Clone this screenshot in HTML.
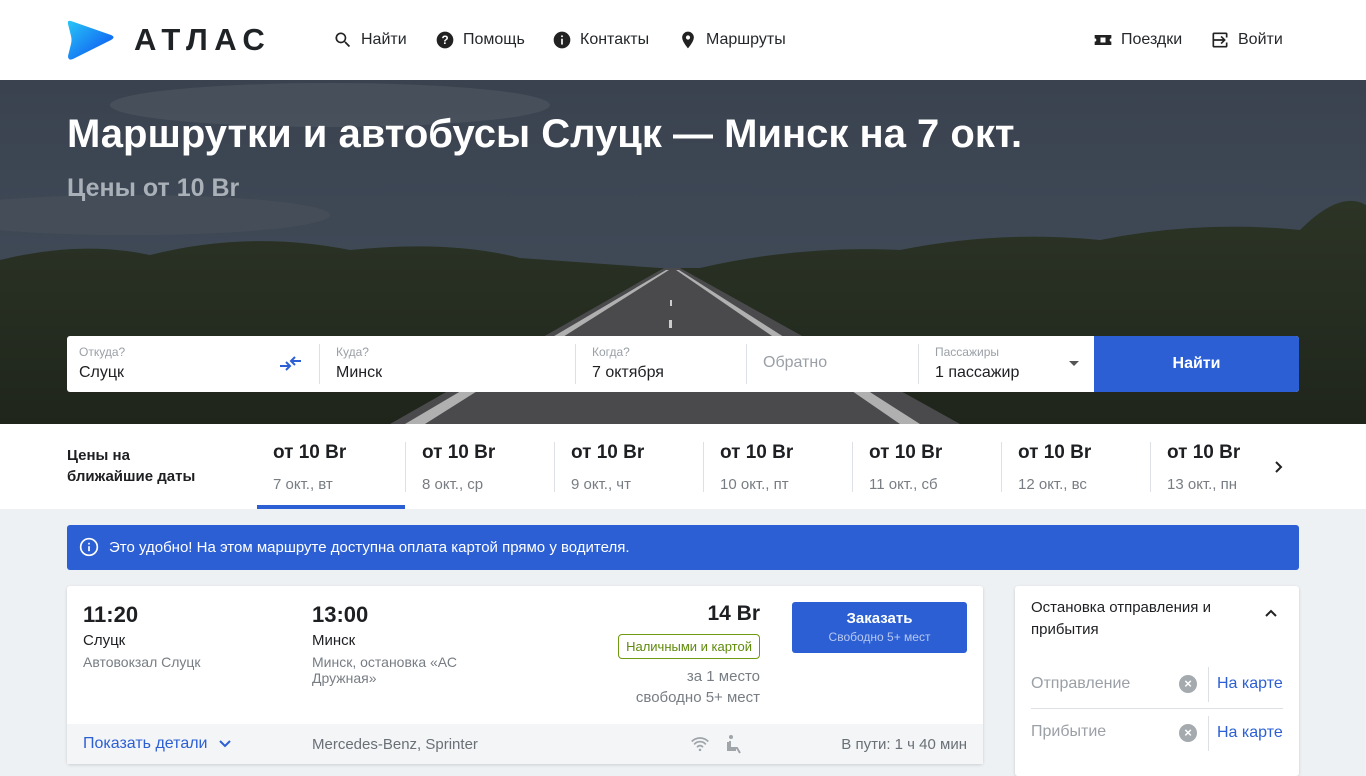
<!DOCTYPE html>
<html><head><meta charset="utf-8"><style>
*{box-sizing:border-box;margin:0;padding:0}
body{width:1366px;height:768px;overflow:hidden;font-family:"Liberation Sans",sans-serif;background:#eef1f4;color:#1d1f22;position:relative}
.hdr{position:absolute;top:0;left:0;width:1366px;height:80px;background:#fff}
.nav{position:absolute;top:30px;font-size:16px;color:#25282b;display:flex;align-items:center;gap:8px}
.hero{position:absolute;top:80px;left:0;width:1366px;height:344px;overflow:hidden}
.ab{position:absolute}
.form{position:absolute;top:336px;left:67px;width:1232px;height:56px;background:#fff;border-radius:3px}
.lbl{position:absolute;top:9px;font-size:12px;color:#9aa0a6}
.val{position:absolute;top:28px;font-size:16px;color:#1d1f22}
.sep{position:absolute;top:8px;width:1px;height:40px;background:#dde1e5}
.dates{position:absolute;top:424px;left:0;width:1366px;height:85px;background:#fff}
.d{position:absolute;top:18px;width:149px;padding-left:16px;height:50px}
.d b{font-size:19px;display:block}
.d span{font-size:15px;color:#777d83;display:block;margin-top:12px}
.card{position:absolute;background:#fff;box-shadow:0 1px 3px rgba(0,0,0,.15);border-radius:3px}
</style></head><body>
<div class="hdr">
<svg class="ab" style="left:66px;top:20px" width="50" height="41" viewBox="0 0 50 41"><defs><linearGradient id="g" x1="0" y1="0" x2="1" y2="1"><stop offset="0" stop-color="#29c6f6"/><stop offset="1" stop-color="#0a4cf3"/></linearGradient></defs><path d="M2 4 Q1 0 5 1 L45 15 Q50 17 45 20 L7 39 Q2 41 2 36 L5 24 Q6 20 5 16 Z" fill="url(#g)"/></svg>
<div class="ab" style="left:134px;top:22px;font-size:31px;font-weight:bold;letter-spacing:6.5px;color:#1f2326">АТЛАС</div>
<div class="nav" style="left:333px"><svg width="20" height="20" viewBox="0 0 24 24"><path d="M15.5 14h-.8l-.3-.3A6.5 6.5 0 1 0 9.5 16a6.5 6.5 0 0 0 4.2-1.6l.3.3v.8l5 5 1.5-1.5zm-6 0a4.5 4.5 0 1 1 0-9 4.5 4.5 0 0 1 0 9z" fill="#222"/></svg>Найти</div>
<div class="nav" style="left:435px"><svg width="20" height="20" viewBox="0 0 24 24"><circle cx="12" cy="12" r="10" fill="#222"/><text x="12" y="17" font-size="14" font-weight="bold" fill="#fff" text-anchor="middle" font-family="Liberation Sans">?</text></svg>Помощь</div>
<div class="nav" style="left:552px"><svg width="20" height="20" viewBox="0 0 24 24"><circle cx="12" cy="12" r="10" fill="#222"/><rect x="11" y="10.5" width="2" height="7" fill="#fff"/><rect x="11" y="6.5" width="2" height="2" fill="#fff"/></svg>Контакты</div>
<div class="nav" style="left:678px;top:29px"><svg width="20" height="22" viewBox="0 0 24 24"><path d="M12 2a7 7 0 0 0-7 7c0 5 7 13 7 13s7-8 7-13a7 7 0 0 0-7-7zm0 9.5a2.5 2.5 0 1 1 0-5 2.5 2.5 0 0 1 0 5z" fill="#222"/></svg>Маршруты</div>
<div class="nav" style="left:1093px"><svg width="20" height="20" viewBox="0 0 24 24"><path d="M2 6h20v4a2 2 0 0 0 0 4v4H2v-4a2 2 0 0 0 0-4z" fill="#222"/><rect x="9" y="9" width="6" height="6" fill="#fff"/></svg>Поездки</div>
<div class="nav" style="left:1210px"><svg width="20" height="20" viewBox="0 0 24 24"><path d="M10 17l1.4-1.4-2.6-2.6H19v-2H8.8l2.6-2.6L10 7l-5 5zM19 3H5a2 2 0 0 0-2 2v4h2V5h14v14H5v-4H3v4a2 2 0 0 0 2 2h14a2 2 0 0 0 2-2V5a2 2 0 0 0-2-2z" fill="#222" transform="scale(-1,1) translate(-24,0)"/></svg>Войти</div>
</div>
<div class="hero">
<svg width="1366" height="344" viewBox="0 0 1366 344" preserveAspectRatio="none">
<defs><linearGradient id="sky" x1="0" y1="0" x2="0" y2="1"><stop offset="0" stop-color="#3a424f"/><stop offset=".5" stop-color="#3f4956"/><stop offset="1" stop-color="#3e4650"/></linearGradient>
<linearGradient id="tr" x1="0" y1="0" x2="0" y2="1"><stop offset="0" stop-color="#2c3426"/><stop offset="1" stop-color="#1f251b"/></linearGradient></defs>
<rect width="1366" height="344" fill="url(#sky)"/>
<ellipse cx="330" cy="25" rx="220" ry="22" fill="#545c66" opacity=".5"/>
<ellipse cx="130" cy="135" rx="200" ry="20" fill="#4d545e" opacity=".45"/>
<path d="M0 180 Q80 160 150 175 Q250 150 350 170 Q450 160 520 178 L660 188 L700 188 Q800 165 900 170 Q1000 150 1100 160 Q1200 140 1300 150 Q1340 110 1366 125 L1366 344 L0 344Z" fill="url(#tr)"/>
<path d="M664 188 L680 188 L960 344 L390 344 Z" fill="#4a4a4c"/>
<path d="M666 190 L405 344 L425 344 L669 190Z M676 190 L900 344 L920 344 L679 190Z" fill="#c9c9c9" opacity=".8"/>
<path d="M670 220 h2 v6 h-2z M669 240 h3 v8 h-3z" fill="#ccc"/>
</svg>
<div class="ab" style="left:67px;top:32px;font-size:40px;font-weight:bold;color:#fff">Маршрутки и автобусы Слуцк — Минск на 7 окт.</div>
<div class="ab" style="left:67px;top:94px;font-size:25px;font-weight:bold;color:#aab0b7">Цены от 10 Br</div>
</div>
<div class="form">
<div class="lbl" style="left:12px">Откуда?</div><div class="val" style="left:12px">Слуцк</div>
<svg class="ab" style="left:212px;top:18px" width="24" height="20" viewBox="0 0 24 20"><path d="M1 12h10M7 8l4 4-4 4M22 7H12M16 3l-4 4 4 4" stroke="#2c5fd4" stroke-width="2" fill="none"/></svg>
<div class="sep" style="left:252px"></div>
<div class="lbl" style="left:269px">Куда?</div><div class="val" style="left:269px">Минск</div>
<div class="sep" style="left:508px"></div>
<div class="lbl" style="left:525px">Когда?</div><div class="val" style="left:525px">7 октября</div>
<div class="sep" style="left:679px"></div>
<div class="val" style="left:696px;top:18px;color:#9aa0a6">Обратно</div>
<div class="sep" style="left:851px"></div>
<div class="lbl" style="left:868px">Пассажиры</div><div class="val" style="left:868px">1 пассажир</div>
<div class="ab" style="left:1002px;top:25px;width:0;height:0;border-left:5px solid transparent;border-right:5px solid transparent;border-top:5px solid #555"></div>
<div class="ab" style="left:1027px;top:0;width:205px;height:56px;background:#2c5fd4;border-radius:0 3px 3px 0;color:#fff;font-weight:bold;font-size:16px;text-align:center;line-height:56px">Найти</div>
</div>
<div class="dates">
<div class="ab" style="left:67px;top:21px;font-size:15px;font-weight:bold;line-height:21px">Цены на<br>ближайшие даты</div>
<div class="d" style="left:257px"><b>от 10 Br</b><span>7 окт., вт</span></div>
<div class="ab" style="left:257px;top:81px;width:148px;height:4px;background:#2c5fd4"></div>
<div class="d" style="left:405px;border-left:1px solid #dde1e5"><b>от 10 Br</b><span>8 окт., ср</span></div>
<div class="d" style="left:554px;border-left:1px solid #dde1e5"><b>от 10 Br</b><span>9 окт., чт</span></div>
<div class="d" style="left:703px;border-left:1px solid #dde1e5"><b>от 10 Br</b><span>10 окт., пт</span></div>
<div class="d" style="left:852px;border-left:1px solid #dde1e5"><b>от 10 Br</b><span>11 окт., сб</span></div>
<div class="d" style="left:1001px;border-left:1px solid #dde1e5"><b>от 10 Br</b><span>12 окт., вс</span></div>
<div class="d" style="left:1150px;border-left:1px solid #dde1e5;width:110px"><b>от 10 Br</b><span>13 окт., пн</span></div>
<svg class="ab" style="left:1272px;top:36px" width="14" height="14" viewBox="0 0 14 14"><path d="M4 2l5 5-5 5" stroke="#222" stroke-width="2" fill="none"/></svg>
</div>
<div class="ab" style="left:67px;top:525px;width:1232px;height:45px;background:#2c5fd4;border-radius:3px;color:#fff;font-size:15px">
<svg class="ab" style="left:12px;top:12px" width="20" height="20" viewBox="0 0 24 24"><circle cx="12" cy="12" r="10" stroke="#fff" stroke-width="2" fill="none"/><rect x="11" y="11" width="2" height="6" fill="#fff"/><rect x="11" y="7" width="2" height="2" fill="#fff"/></svg>
<div class="ab" style="left:42px;top:14px">Это удобно! На этом маршруте доступна оплата картой прямо у водителя.</div></div>
<div class="card" style="left:67px;top:586px;width:916px;height:178px">
<div class="ab" style="left:16px;top:16px;font-size:22px;font-weight:bold">11:20</div>
<div class="ab" style="left:16px;top:46px;font-size:15px">Слуцк</div>
<div class="ab" style="left:16px;top:68px;font-size:14px;color:#777d83">Автовокзал Слуцк</div>
<div class="ab" style="left:245px;top:16px;font-size:22px;font-weight:bold">13:00</div>
<div class="ab" style="left:245px;top:46px;font-size:15px">Минск</div>
<div class="ab" style="left:245px;top:68px;font-size:14px;color:#777d83;width:170px;line-height:16px">Минск, остановка «АС Дружная»</div>
<div class="ab" style="right:223px;top:16px;font-size:21px;font-weight:bold">14 Br</div>
<div class="ab" style="right:223px;top:48px;border:1px solid #6f9a10;color:#5f8a0a;border-radius:4px;font-size:13px;padding:4px 7px">Наличными и картой</div>
<div class="ab" style="right:223px;top:80px;font-size:15px;color:#777d83;text-align:right;line-height:21px">за 1 место<br>свободно 5+ мест</div>
<div class="ab" style="left:725px;top:16px;width:175px;height:51px;background:#2c5fd4;border-radius:3px;color:#fff;text-align:center"><div style="font-weight:bold;font-size:15px;margin-top:8px">Заказать</div><div style="font-size:12px;color:#b8c8ef;margin-top:3px">Свободно 5+ мест</div></div>
<div class="ab" style="left:0;top:138px;width:916px;height:40px;background:#f3f5f7">
<div class="ab" style="left:16px;top:11px;font-size:16px;color:#2c5fd4">Показать детали</div>
<svg class="ab" style="left:152px;top:16px" width="12" height="8" viewBox="0 0 12 8"><path d="M1 1l5 5 5-5" stroke="#2c5fd4" stroke-width="2" fill="none"/></svg>
<div class="ab" style="left:245px;top:12px;font-size:15px;color:#6a7076">Mercedes-Benz, Sprinter</div>
<svg class="ab" style="left:623px;top:11px" width="20" height="18" viewBox="0 0 24 20"><path d="M2 7a14 14 0 0 1 20 0M5 10.5a9 9 0 0 1 14 0M8.5 14a4 4 0 0 1 7 0" stroke="#a0a5aa" stroke-width="2" fill="none"/><circle cx="12" cy="17" r="1.5" fill="#a0a5aa"/></svg>
<svg class="ab" style="left:659px;top:10px" width="18" height="20" viewBox="0 0 18 20"><circle cx="5" cy="3" r="2" fill="#a0a5aa"/><path d="M4 7v7h7l3 5M2 8v8h8" stroke="#a0a5aa" stroke-width="2" fill="none"/></svg>
<div class="ab" style="right:16px;top:12px;font-size:15px;color:#6a7076">В пути: 1 ч 40 мин</div>
</div></div>
<div class="card" style="left:1015px;top:586px;width:284px;height:190px">
<div class="ab" style="left:16px;top:11px;font-size:15px;line-height:22px;width:200px">Остановка отправления и прибытия</div>
<svg class="ab" style="left:249px;top:22px" width="14" height="10" viewBox="0 0 14 10"><path d="M2 8l5-5 5 5" stroke="#222" stroke-width="2" fill="none"/></svg>
<div class="ab" style="left:16px;top:89px;font-size:16px;color:#9aa0a6">Отправление</div>
<div class="ab" style="left:164px;top:89px;width:18px;height:18px;border-radius:50%;background:#a5aaaf;color:#fff;font-size:13px;text-align:center;line-height:18px;font-weight:bold">×</div>
<div class="ab" style="left:193px;top:81px;width:1px;height:35px;background:#dde1e5"></div>
<div class="ab" style="left:202px;top:89px;font-size:16px;color:#2c5fd4">На карте</div>
<div class="ab" style="left:16px;top:122px;width:252px;height:1px;background:#dde1e5"></div>
<div class="ab" style="left:16px;top:137px;font-size:16px;color:#9aa0a6">Прибытие</div>
<div class="ab" style="left:164px;top:138px;width:18px;height:18px;border-radius:50%;background:#a5aaaf;color:#fff;font-size:13px;text-align:center;line-height:18px;font-weight:bold">×</div>
<div class="ab" style="left:193px;top:130px;width:1px;height:35px;background:#dde1e5"></div>
<div class="ab" style="left:202px;top:138px;font-size:16px;color:#2c5fd4">На карте</div>
</div>
</body></html>
